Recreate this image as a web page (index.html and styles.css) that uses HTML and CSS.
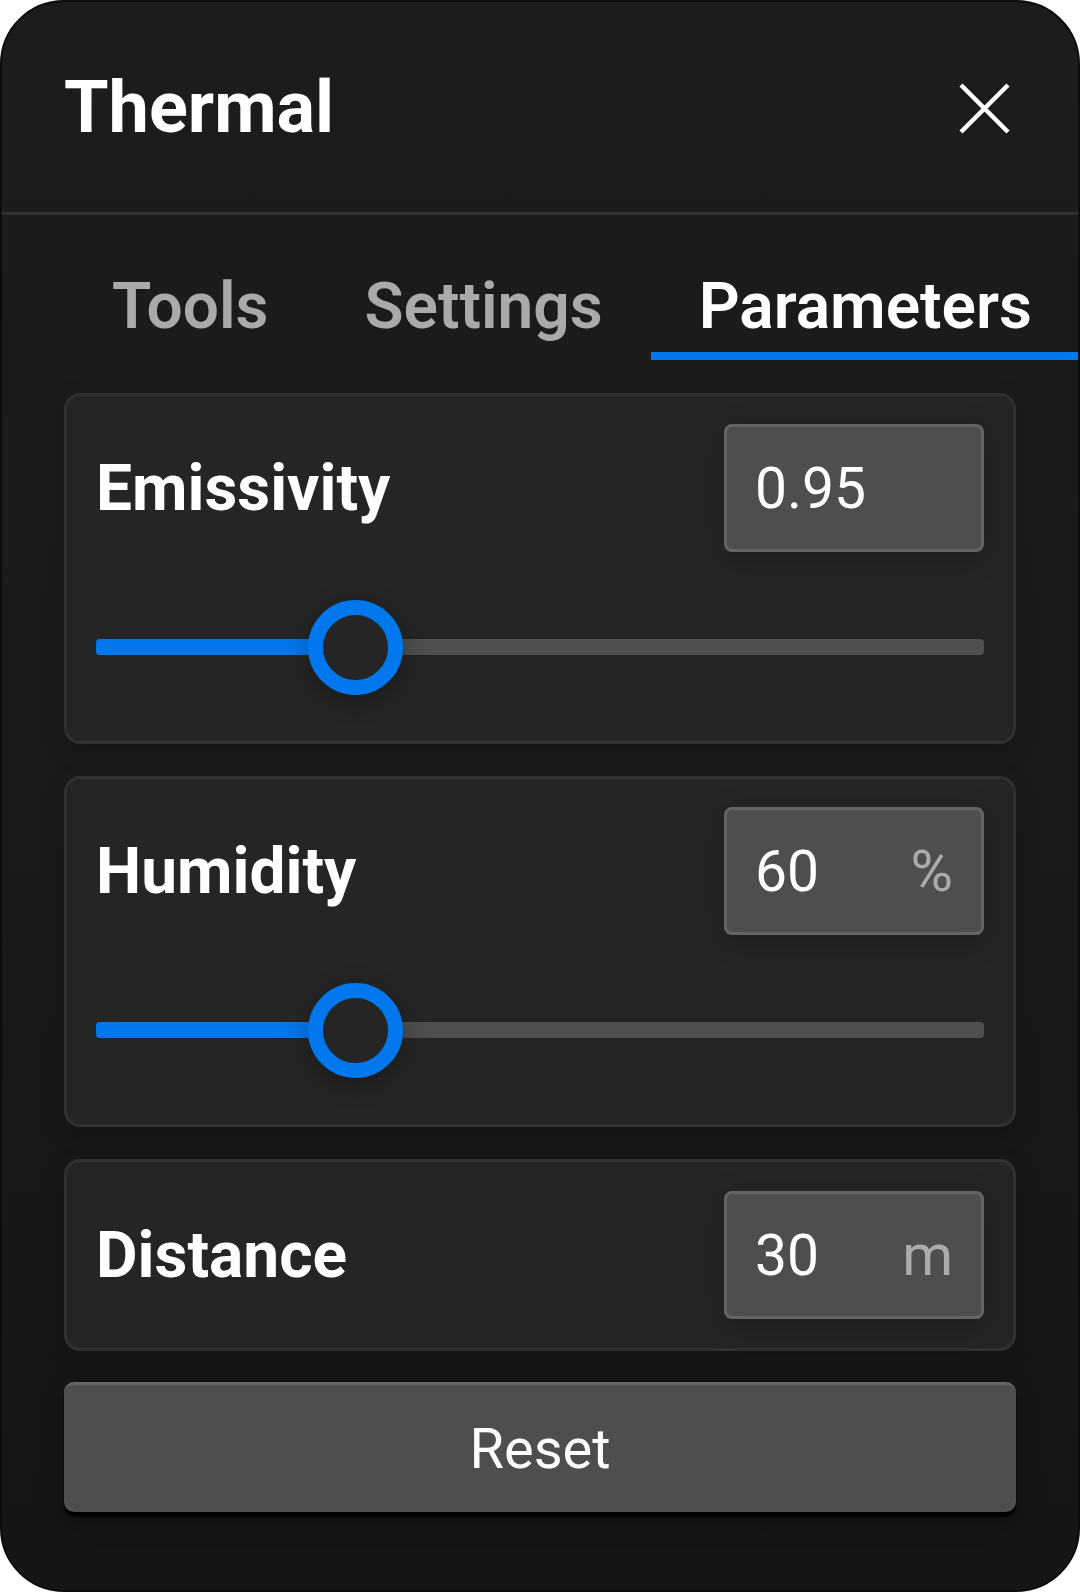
FILE: index.html
```html
<!DOCTYPE html>
<html lang="en">
<head>
<meta charset="utf-8">
<title>Thermal</title>
<link rel="stylesheet" href="styles.css">
</head>
<body>
<div class="panel">
  <header class="header">
    <h1 class="title">Thermal</h1>
    <button class="close" aria-label="Close">
      <svg class="close-icon" viewBox="0 0 51 51" width="51" height="51">
        <path d="M2 2 L49 49 M49 2 L2 49" stroke="#ffffff" stroke-width="4.5" fill="none" stroke-linecap="butt"/>
      </svg>
    </button>
  </header>
  <nav class="tabs">
    <div class="tab">Tools</div>
    <div class="tab">Settings</div>
    <div class="tab tab-active">Parameters</div>
  </nav>
  <main class="content">
    <section class="card">
      <div class="row">
        <span class="label">Emissivity</span>
        <div class="field"><span class="value">0.95</span></div>
      </div>
      <div class="slider">
        <div class="track"><div class="fill" style="width:29.2%"></div></div>
        <div class="thumb" style="left:29.2%"></div>
      </div>
    </section>
    <section class="card">
      <div class="row">
        <span class="label">Humidity</span>
        <div class="field"><span class="value">60</span><span class="unit">%</span></div>
      </div>
      <div class="slider">
        <div class="track"><div class="fill" style="width:29.2%"></div></div>
        <div class="thumb" style="left:29.2%"></div>
      </div>
    </section>
    <section class="card card-compact">
      <div class="row">
        <span class="label">Distance</span>
        <div class="field"><span class="value">30</span><span class="unit">m</span></div>
      </div>
    </section>
    <button class="reset">Reset</button>
  </main>
</div>
</body>
</html>
```
FILE: styles.css
```css
* {
  box-sizing: border-box;
}

html, body {
  margin: 0;
  padding: 0;
  background: #ffffff;
}

body {
  font-family: Roboto, "Liberation Sans", Arial, sans-serif;
  color: #ffffff;
}

.panel {
  width: 1080px;
  height: 1592px;
  background: linear-gradient(180deg, #1c1c1c 0%, #1a1a1a 50%, #151515 100%);
  border: 2px solid #0c0c0c;
  border-radius: 64px;
  overflow: hidden;
  display: flex;
  flex-direction: column;
}

.header {
  height: 213px;
  flex-shrink: 0;
  display: flex;
  align-items: center;
  justify-content: space-between;
  padding: 0 68px 0 62px;
  border-bottom: 3px solid #2f2f2f;
}

.title {
  margin: 0;
  font-size: 72px;
  font-weight: 700;
  line-height: normal;
  color: #ffffff;
}

.close {
  background: none;
  border: 0;
  padding: 0;
  width: 51px;
  height: 51px;
  display: flex;
  align-items: center;
  justify-content: center;
  margin-top: 2px;
}

.close-icon {
  display: block;
}

.tabs {
  display: flex;
  padding-left: 62px;
  flex-shrink: 0;
}

.tab {
  flex-shrink: 0;
  white-space: nowrap;
  font-size: 64px;
  font-weight: 600;
  line-height: normal;
  color: #aaaaaa;
  padding: 54px 48px 8px;
  border-bottom: 8px solid transparent;
}

.tab-active {
  color: #ffffff;
  border-bottom-color: #0077ed;
}

.content {
  display: flex;
  flex-direction: column;
  gap: 32px;
  padding: 33px 62px 0;
}

.card {
  background: #252525;
  border: 3px solid #313131;
  border-radius: 16px;
  padding: 28px 29px;
  box-shadow: 0 8px 24px rgba(0, 0, 0, 0.18);
}

.card-compact {
  padding-top: 29px;
  padding-bottom: 29px;
}

.row {
  display: flex;
  align-items: center;
  justify-content: space-between;
}

.label {
  font-size: 64px;
  font-weight: 700;
  line-height: normal;
}

.field {
  width: 260px;
  height: 128px;
  background: #4e4e4e;
  border: 3px solid #646464;
  border-radius: 8px;
  display: flex;
  align-items: center;
  justify-content: space-between;
  padding: 0 28px;
  box-shadow: 0 6px 28px rgba(0, 0, 0, 0.22);
}

.value {
  font-size: 57px;
  font-weight: 400;
  color: #ffffff;
}

.unit {
  font-size: 58px;
  font-weight: 400;
  color: #ababab;
}

.slider {
  position: relative;
  height: 94px;
  margin: 48px 0 19px;
  display: flex;
  align-items: center;
}

.track {
  width: 100%;
  height: 16px;
  border-radius: 4px;
  background: #4e4e4e;
  overflow: hidden;
}

.fill {
  height: 100%;
  background: #0077ed;
}

.thumb {
  position: absolute;
  top: 0;
  width: 95px;
  height: 95px;
  margin-left: -47.5px;
  border-radius: 50%;
  border: 15px solid #0077ed;
  background: #252525;
  box-shadow: 0 6px 24px rgba(0, 0, 0, 0.3);
}

.reset {
  margin-top: -1px;
  height: 130px;
  width: 100%;
  background: #4e4e4e;
  border: 0;
  border-top: 3px solid #646464;
  border-radius: 10px;
  font-family: Roboto, "Liberation Sans", Arial, sans-serif;
  font-size: 56px;
  font-weight: 400;
  color: #ffffff;
  box-shadow: 0 5px 2px rgba(0, 0, 0, 0.9), 0 10px 24px rgba(0, 0, 0, 0.3);
}
```
